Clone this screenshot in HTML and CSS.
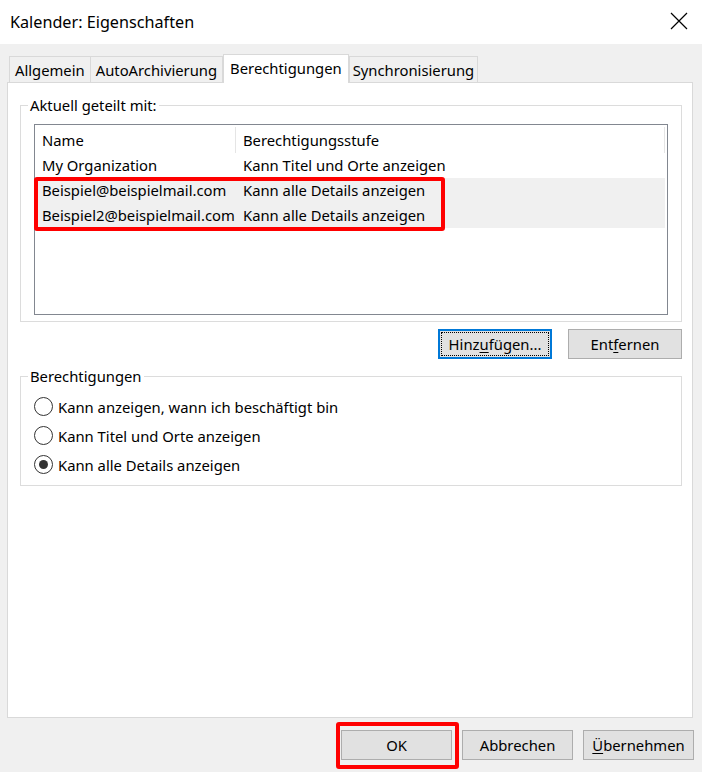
FILE: index.html
```html
<!DOCTYPE html>
<html lang="de">

<head>
    <meta charset="UTF-8">
    <meta name="viewport" content="width=device-width, initial-scale=1.0">
    <title>Kalender: Eigenschaften</title>
    <link rel="stylesheet" href="styles.css">
</head>

<body>
    <div class="dialog">
        <div class="title-bar">
            <span class="title">Kalender: Eigenschaften</span>
            <svg class="close" width="18" height="18" viewBox="0 0 18 18">
                <path d="M1 1 L17 17 M17 1 L1 17" stroke="#000" stroke-width="1.2" fill="none" />
            </svg>
        </div>

        <div class="client">
            <div class="tabs">
                <div class="tab">Allgemein</div>
                <div class="tab">AutoArchivierung</div>
                <div class="tab active">Berechtigungen</div>
                <div class="tab">Synchronisierung</div>
            </div>

            <div class="tab-panel">
                <fieldset class="group shared">
                    <legend>Aktuell geteilt mit:</legend>
                    <div class="list-box">
                        <div class="list-row list-header">
                            <div class="col-name">Name</div>
                            <div class="col-level">Berechtigungsstufe</div>
                        </div>
                        <div class="list-row">
                            <div class="col-name">My Organization</div>
                            <div class="col-level">Kann Titel und Orte anzeigen</div>
                        </div>
                        <div class="list-row selected">
                            <div class="col-name">Beispiel@beispielmail.com</div>
                            <div class="col-level">Kann alle Details anzeigen</div>
                        </div>
                        <div class="list-row selected">
                            <div class="col-name">Beispiel2@beispielmail.com</div>
                            <div class="col-level">Kann alle Details anzeigen</div>
                        </div>
                        <div class="mark mark-rows"></div>
                    </div>
                </fieldset>

                <div class="list-actions">
                    <button class="btn focused"><span class="focus-rect">Hinz<u>u</u>fügen...</span></button>
                    <button class="btn">Ent<u>f</u>ernen</button>
                </div>

                <fieldset class="group permissions">
                    <legend>Berechtigungen</legend>
                    <label class="radio"><span class="dot"></span>Kann anzeigen, wann ich beschäftigt bin</label>
                    <label class="radio"><span class="dot"></span>Kann Titel und Orte anzeigen</label>
                    <label class="radio checked"><span class="dot"></span>Kann alle Details anzeigen</label>
                </fieldset>
            </div>

            <div class="dialog-buttons">
                <div class="ok-wrap">
                    <button class="btn wide">OK</button>
                    <div class="mark mark-ok"></div>
                </div>
                <button class="btn wide">Abbrechen</button>
                <button class="btn wide"><u>Ü</u>bernehmen</button>
            </div>
        </div>
    </div>
</body>

</html>
```

FILE: styles.css
```css
* {
    margin: 0;
    padding: 0;
    box-sizing: border-box;
}

body {
    font-family: "Noto Sans", "Open Sans", sans-serif;
    font-size: 14.8px;
    color: #000;
    background: #f0f0f0;
    width: 702px;
    height: 772px;
    overflow: hidden;
}

.dialog {
    display: flex;
    flex-direction: column;
    height: 772px;
}

.title-bar {
    height: 44px;
    background: #fff;
    display: flex;
    align-items: center;
    justify-content: space-between;
    padding: 0 14px 0 10px;
}

.title {
    font-size: 16.2px;
    padding-bottom: 1px;
}

.close {
    margin-bottom: 2px;
}

.client {
    flex: 1;
    display: flex;
    flex-direction: column;
    padding: 10px 9px 12px 7px;
}

.tabs {
    display: flex;
    align-items: flex-end;
    height: 28px;
    padding-left: 2px;
    position: relative;
    z-index: 1;
}

.tab {
    height: 26px;
    padding: 0 5px;
    line-height: 27px;
    background: #f0f0f0;
    border: 1px solid #d9d9d9;
    border-bottom: none;
    white-space: nowrap;
}

.tab + .tab {
    border-left: none;
}

.tab.active {
    height: 29px;
    margin-bottom: -1px;
    background: #fff;
    line-height: 27px;
    padding: 0 6px;
    border-left: 1px solid #d9d9d9;
}

.tab.active + .tab {
    border-left: 1px solid #d9d9d9;
    padding: 0 3px;
}

.tab-panel {
    height: 636px;
    background: #fff;
    border: 1px solid #d9d9d9;
    padding: 12px 10px 0 12px;
}

.group {
    border: 1px solid #dcdcdc;
    padding: 9px 13px 6px 13px;
}

.group legend {
    margin-left: -6px;
    padding: 0 2px;
    line-height: 20px;
}

.list-box {
    position: relative;
    height: 191px;
    border: 1px solid #828790;
    padding-right: 2px;
}

.list-row {
    display: flex;
    height: 25px;
    line-height: 25px;
    white-space: nowrap;
}

.list-header {
    height: 28px;
    position: relative;
}

.list-header::after {
    content: "";
    position: absolute;
    right: 0;
    top: 2px;
    height: 26px;
    border-left: 1px solid #e5e5e5;
}

.col-name {
    width: 201px;
    padding-left: 7px;
    overflow: hidden;
}

.col-level {
    padding-left: 7px;
}

.list-header .col-name {
    border-right: 1px solid #e5e5e5;
    margin-top: 2px;
    line-height: 26px;
    height: 26px;
}

.list-header .col-level {
    margin-top: 2px;
    line-height: 26px;
}

.selected {
    background: #f0f0f0;
}

.mark {
    position: absolute;
    border: 4px solid #ff0000;
    border-radius: 3px;
    pointer-events: none;
}

.mark-rows {
    left: -1px;
    top: 52px;
    width: 411px;
    height: 54px;
}

.list-actions {
    display: flex;
    justify-content: flex-end;
    gap: 16px;
    margin: 7px 0 7px;
}

.btn {
    font-family: inherit;
    font-size: 14.8px;
    color: #000;
    height: 30px;
    width: 114px;
    background: #e1e1e1;
    border: 1px solid #adadad;
    line-height: 26px;
}

.btn u {
    text-underline-offset: 2px;
}

.btn.focused {
    border: 2px solid #0078d7;
    padding: 1px;
}

.focus-rect {
    display: block;
    height: 100%;
    border: 1px dotted #000;
    line-height: 22px;
}

.permissions {
    padding: 6px 13px 6px 13px;
}

.radio {
    display: flex;
    align-items: center;
    height: 29px;
    gap: 5px;
}

.dot {
    width: 19px;
    height: 19px;
    border: 1px solid #333;
    border-radius: 50%;
    display: flex;
    align-items: center;
    justify-content: center;
}

.radio.checked .dot::after {
    content: "";
    width: 9px;
    height: 9px;
    border-radius: 50%;
    background: #333;
}

.dialog-buttons {
    display: flex;
    justify-content: flex-end;
    gap: 10px;
    margin-top: 12px;
    margin-right: -1px;
}

.btn.wide {
    width: 111px;
}

.ok-wrap {
    position: relative;
}

.mark-ok {
    left: -5px;
    top: -8px;
    width: 123px;
    height: 47px;
}
```
